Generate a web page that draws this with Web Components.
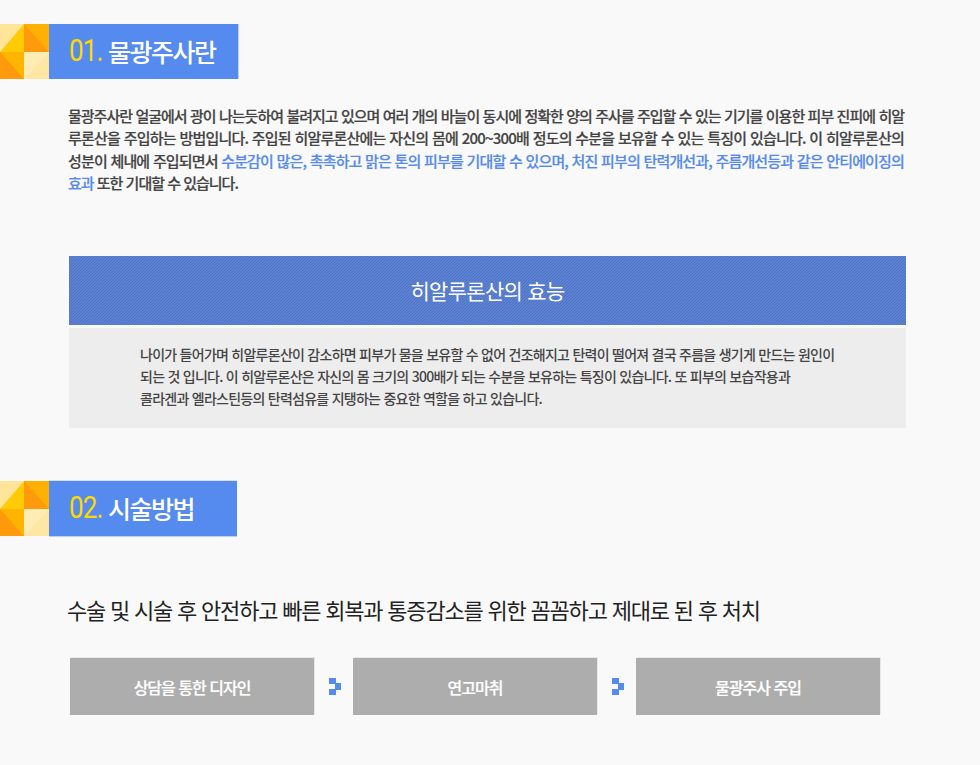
<!DOCTYPE html>
<html lang="ko">
<head>
<meta charset="utf-8">
<title>물광주사</title>
<style>
    html, body { margin: 0; padding: 0; background: #f9f9f9; }
    body { font-family: "Noto Sans CJK KR", "Noto Sans", sans-serif; }
    page-view { display: block; }
    .hl { color: #558aee; }
</style>
</head>
<body>
<page-view>
    <section-title num="01." width="189" style="margin-top:24px;--edge:1px 0 0 #b9cff7">물광주사란</section-title>
    <intro-text>
        <text-line>물광주사란 얼굴에서 광이 나는듯하여 불려지고 있으며 여러 개의 바늘이 동시에 정확한 양의 주사를 주입할 수 있는 기기를 이용한 피부 진피에 히알</text-line>
        <text-line style="letter-spacing:-0.8px">루론산을 주입하는 방법입니다. 주입된 히알루론산에는 자신의 몸에 200~300배 정도의 수분을 보유할 수 있는 특징이 있습니다. 이 히알루론산의</text-line>
        <text-line style="letter-spacing:-0.85px">성분이 체내에 주입되면서 <span class="hl">수분감이 많은, 촉촉하고 맑은 톤의 피부를 기대할 수 있으며, 처진 피부의 탄력개선과, 주름개선등과 같은 안티에이징의</span></text-line>
        <span class="hl">효과</span> 또한 기대할 수 있습니다.
    </intro-text>
    <info-panel heading="히알루론산의 효능">
        나이가 들어가며 히알루론산이 감소하면 피부가 물을 보유할 수 없어 건조해지고 탄력이 떨어져 결국 주름을 생기게 만드는 원인이<br>
        되는 것 입니다. 이 히알루론산은 자신의 몸 크기의 300배가 되는 수분을 보유하는 특징이 있습니다. 또 피부의 보습작용과<br>
        콜라겐과 엘라스틴등의 탄력섬유를 지탱하는 중요한 역할을 하고 있습니다.
    </info-panel>
    <section-title num="02." width="188" style="margin-top:53px;--edge:0 1px 0 #b9cff7,0 -1px 0 #d5e2fa">시술방법</section-title>
    <lead-line>수술 및 시술 후 안전하고 빠른 회복과 통증감소를 위한 꼼꼼하고 제대로 된 후 처치</lead-line>
    <step-flow>
        <step-box>상담을 통한 디자인</step-box>
        <step-arrow></step-arrow>
        <step-box>연고마취</step-box>
        <step-arrow></step-arrow>
        <step-box>물광주사 주입</step-box>
    </step-flow>
</page-view>

<script>
const titleTpl = document.createElement('template');
titleTpl.innerHTML = `
    <style>
        :host { display: flex; height: 55px; }
        svg { display: block; flex: none; }
        .bar {
            display: flex;
            align-items: center;
            box-sizing: border-box;
            padding: 0 0 2px 20px;
            background: #558aee;
            box-shadow: var(--edge, none);
            color: #fff;
            font-size: 25px;
            font-weight: 500;
            letter-spacing: -1.5px;
            white-space: nowrap;
        }
        .num {
            display: inline-block;
            width: 39px;
            flex: none;
            font-family: "Roboto", sans-serif;
            font-weight: 400;
            color: #ffd800;
            font-size: 31px;
            letter-spacing: -1px;
            transform: scaleX(.84);
            transform-origin: left center;
        }
    </style>
    <svg width="49" height="55" viewBox="0 0 49 55">
        <rect width="24" height="28" fill="#ffe49a"/>
        <polygon points="24,0 24,28 0,28" fill="#ffcb05"/>
        <rect x="24" width="25" height="28" fill="#ffb000"/>
        <polygon points="24,0 49,28 24,28" fill="#ff9a0c"/>
        <rect y="28" width="24" height="27" fill="#ffb400"/>
        <polygon points="0,28 24,55 0,55" fill="#ff9a0c"/>
        <rect x="24" y="28" width="25" height="27" fill="#ffecb4"/>
        <polygon points="49,28 49,55 24,55" fill="#ffe6a2"/>
    </svg>
    <div class="bar"><span class="num"></span><slot></slot></div>
`;

class SectionTitle extends HTMLElement {
    constructor() {
        super();
        this.attachShadow({mode: 'open'});
        this.shadowRoot.appendChild(titleTpl.content.cloneNode(true));
    }
    connectedCallback() {
        this.shadowRoot.querySelector('.num').textContent = this.getAttribute('num');
        this.shadowRoot.querySelector('.bar').style.width = this.getAttribute('width') + 'px';
    }
}

class IntroText extends HTMLElement {
    constructor() {
        super();
        this.attachShadow({mode: 'open'}).innerHTML = `
            <style>
                :host {
                    display: block;
                    width: 836px;
                    margin: 26px 0 0 68px;
                    color: #444;
                    font-size: 15px;
                    font-weight: 500;
                    line-height: 22.3px;
                    letter-spacing: -1px;
                    -webkit-text-stroke: 0.2px currentColor;
                }
            </style>
            <slot></slot>`;
    }
}

// one full line stretched out to the column width
class TextLine extends HTMLElement {
    constructor() {
        super();
        this.attachShadow({mode: 'open'}).innerHTML = `
            <style>
                :host { display: block; text-align: justify; text-align-last: justify; white-space: nowrap; }
            </style>
            <slot></slot>`;
    }
}

class InfoPanel extends HTMLElement {
    constructor() {
        super();
        this.attachShadow({mode: 'open'}).innerHTML = `
            <style>
                :host { display: block; width: 837px; margin: 62px 0 0 69px; }
                h3 {
                    margin: 0;
                    height: 69px;
                    line-height: 68px;
                    text-align: center;
                    color: #fff;
                    font-size: 21px;
                    font-weight: 400;
                    letter-spacing: -0.7px;
                    background: linear-gradient(135deg, #5c82d6 0 33%, #4f72c0 33% 50%, #5c82d6 50% 83%, #4f72c0 83% 100%) 0 0 / 3px 3px;
                }
                .body {
                    margin-top: 3px;
                    height: 100px;
                    box-sizing: border-box;
                    padding: 15px 0 0 71px;
                    background: #ededed;
                    color: #444;
                    font-size: 14px;
                    font-weight: 500;
                    line-height: 22px;
                    letter-spacing: -0.74px;
                    white-space: nowrap;
                }
            </style>
            <h3></h3>
            <div class="body"><slot></slot></div>`;
    }
    connectedCallback() {
        this.shadowRoot.querySelector('h3').textContent = this.getAttribute('heading');
    }
}

class LeadLine extends HTMLElement {
    constructor() {
        super();
        this.attachShadow({mode: 'open'}).innerHTML = `
            <style>
                :host {
                    display: block;
                    margin: 55px 0 0 67px;
                    color: #222;
                    font-size: 22px;
                    line-height: 36px;
                    letter-spacing: -1.2px;
                    white-space: nowrap;
                }
            </style>
            <slot></slot>`;
    }
}

class StepFlow extends HTMLElement {
    constructor() {
        super();
        this.attachShadow({mode: 'open'}).innerHTML = `
            <style>
                :host {
                    display: grid;
                    grid-template-columns: 244px 39px 244px 39px 244px;
                    margin: 31px 0 0 70px;
                    height: 57px;
                }
            </style>
            <slot></slot>`;
    }
}

class StepBox extends HTMLElement {
    constructor() {
        super();
        this.attachShadow({mode: 'open'}).innerHTML = `
            <style>
                :host {
                    display: flex;
                    align-items: center;
                    justify-content: center;
                    background: #adadad;
                    box-shadow: 1px -1px 0 #e8e8e8;
                    color: #fff;
                    font-size: 16px;
                    font-weight: 500;
                    letter-spacing: -1px;
                    -webkit-text-stroke: 0.2px currentColor;
                }
            </style>
            <slot></slot>`;
    }
}

class StepArrow extends HTMLElement {
    constructor() {
        super();
        this.attachShadow({mode: 'open'}).innerHTML = `
            <style>
                :host { display: flex; align-items: center; padding-left: 15px; }
                svg { display: block; }
            </style>
            <svg width="12" height="17" viewBox="0 0 12 17" fill="#558aee">
                <rect x="0" y="0" width="7" height="6"/>
                <rect x="6" y="5" width="6" height="7"/>
                <rect x="0" y="11" width="7" height="6"/>
            </svg>`;
    }
}

customElements.define('section-title', SectionTitle);
customElements.define('intro-text', IntroText);
customElements.define('text-line', TextLine);
customElements.define('info-panel', InfoPanel);
customElements.define('lead-line', LeadLine);
customElements.define('step-flow', StepFlow);
customElements.define('step-box', StepBox);
customElements.define('step-arrow', StepArrow);
</script>
</body>
</html>
